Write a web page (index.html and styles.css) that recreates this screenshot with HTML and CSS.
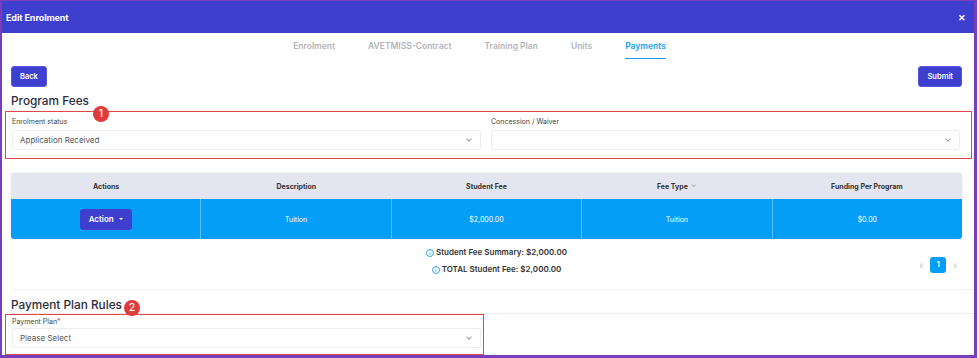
FILE: index.html
```html
<!DOCTYPE html>
<html lang="en">

<head>
  <meta charset="UTF-8">
  <meta name="viewport" content="width=device-width, initial-scale=1.0">
  <title>Edit Enrolment</title>
  <link rel="stylesheet" href="styles.css">
</head>

<body>
  <div class="modal">
    <!-- header -->
    <div class="modal-header">
      <span class="modal-title">Edit Enrolment</span>
      <span class="modal-close">&#10005;</span>
    </div>

    <!-- tabs -->
    <ul class="tabs">
      <li>Enrolment</li>
      <li>AVETMISS-Contract</li>
      <li>Training Plan</li>
      <li>Units</li>
      <li class="active">Payments</li>
    </ul>

    <div class="modal-body">
      <div class="toolbar">
        <button class="btn">Back</button>
        <button class="btn">Submit</button>
      </div>

      <h3 class="section-title">Program Fees<span class="badge badge-1">1</span></h3>

      <div class="marked marked-wide">
        <div class="field">
          <label>Enrolment status</label>
          <div class="select">Application Received<span class="chevron"></span></div>
        </div>
        <div class="field">
          <label>Concession / Waiver</label>
          <div class="select"><span class="chevron"></span></div>
        </div>
      </div>

      <!-- fees table -->
      <div class="fee-table">
        <div class="row head">
          <div class="cell">Actions</div>
          <div class="cell">Description</div>
          <div class="cell">Student Fee</div>
          <div class="cell">Fee Type <span class="sort">&#8964;</span></div>
          <div class="cell">Funding Per Program</div>
        </div>
        <div class="row body">
          <div class="cell"><button class="btn btn-action">Action <span class="caret"></span></button></div>
          <div class="cell">Tuition</div>
          <div class="cell">$2,000.00</div>
          <div class="cell">Tuition</div>
          <div class="cell">$0.00</div>
        </div>
      </div>

      <div class="summary">
        <div class="summary-lines">
          <p><span class="info">i</span>Student Fee Summary: $2,000.00</p>
          <p><span class="info">i</span>TOTAL Student Fee: $2,000.00</p>
        </div>
        <div class="pager">
          <span class="arrow">&#8249;</span>
          <span class="page">1</span>
          <span class="arrow">&#8250;</span>
        </div>
      </div>

      <h3 class="section-title rule">Payment Plan Rules<span class="badge badge-2">2</span></h3>

      <div class="marked marked-half">
        <div class="field">
          <label>Payment Plan<span class="req">*</span></label>
          <div class="select">Please Select<span class="chevron"></span></div>
        </div>
      </div>
    </div>
  </div>
</body>

</html>
```

FILE: styles.css
```css
/* global */
body {
  margin: 0;
  padding: 0;
  background-color: #f0f0f0;
  font-family: Inter, "Open Sans", sans-serif;
  color: #333;
}

.modal {
  width: 972px;
  height: 354px;
  background-color: white;
  border-style: solid;
  border-color: #7a3db8;
  border-width: 1px 3px 3px 2px;
  overflow: hidden;
}

/* header */
.modal-header {
  height: 32px;
  background-color: #3e3ecf;
  color: white;
  display: flex;
  align-items: center;
  justify-content: space-between;
  padding: 0 8px 0 4px;
}

.modal-title {
  font-size: 9px;
  font-weight: 700;
  letter-spacing: -0.1px;
}

.modal-close {
  font-size: 9px;
  font-weight: 700;
}

/* tabs */
.tabs {
  list-style-type: none;
  margin: 0;
  padding: 0 17px 0 0;
  height: 28px;
  display: flex;
  justify-content: center;
  gap: 33px;
}

.tabs li {
  font-size: 8.5px;
  font-weight: 600;
  color: #b3b3bb;
  display: flex;
  align-items: center;
  border-bottom: 1px solid transparent;
  padding-top: 1px;
  margin-bottom: 2px;
}

.tabs li.active {
  color: #1a9cf0;
  border-bottom-color: #1a9cf0;
}

/* body */
.modal-body {
  padding: 5px 12px 0 9px;
}

.toolbar {
  display: flex;
  justify-content: space-between;
}

.btn {
  font-family: inherit;
  background-color: #3e3ecf;
  color: white;
  border: 1px solid #5757e0;
  border-radius: 3px;
  font-size: 7.5px;
  font-weight: 600;
  height: 21px;
  padding: 0 8px;
  cursor: pointer;
}

.section-title {
  position: relative;
  margin: 6px 0 0 0;
  font-size: 11.8px;
  font-weight: 500;
  line-height: 16px;
  color: #2c2c3a;
}

.badge {
  position: absolute;
  top: 13px;
  width: 16px;
  height: 16px;
  border-radius: 50%;
  background-color: #e03a3a;
  color: white;
  font-size: 10.5px;
  font-weight: 500;
  line-height: 16px;
  text-align: center;
}

.badge-1 {
  left: 82px;
}

.badge-2 {
  left: 113px;
  top: 10px;
}

/* red annotation boxes */
.marked {
  border: 1.5px solid #e04848;
  margin: 2px 0 0 -6px;
  padding: 5px 0 8px 6px;
  display: flex;
  gap: 10px;
}

.marked-wide {
  width: 948px;
  padding-right: 11px;
}

.marked-half {
  width: 469px;
  padding-right: 2px;
  margin-top: 0;
  padding-top: 3px;
  padding-bottom: 6px;
}

.marked-half .field {
  gap: 2px;
}

.marked-half .field label {
  line-height: 8px;
}

.field {
  flex: 1;
  display: flex;
  flex-direction: column;
  gap: 3px;
}

.field label {
  font-size: 7px;
  color: #444;
  line-height: 10px;
}

.req {
  color: #e03a3a;
}

.select {
  position: relative;
  box-sizing: border-box;
  height: 20px;
  border: 1px solid #ececf2;
  border-radius: 3px;
  font-size: 8px;
  color: #555;
  line-height: 18px;
  padding-left: 7px;
}

.chevron {
  position: absolute;
  right: 9px;
  top: 6px;
  width: 3px;
  height: 3px;
  border-right: 1px solid #999;
  border-bottom: 1px solid #999;
  transform: rotate(45deg);
}

/* fee table */
.fee-table {
  margin-top: 14px;
  border-radius: 3px;
  overflow: hidden;
  box-shadow: 0 0 2px rgba(0, 0, 0, 0.15);
}

.row {
  display: flex;
}

.cell {
  flex: 1;
  display: flex;
  align-items: center;
  justify-content: center;
  font-size: 7px;
}

.row.head {
  height: 26px;
  background-color: #e3e5ef;
}

.row.head .cell {
  font-weight: 700;
  color: #333;
}

.sort {
  color: #aaa;
  margin-left: 3px;
  font-size: 7px;
  position: relative;
  top: -2px;
}

.row.body {
  height: 40px;
  background-color: #049ef6;
  color: white;
}

.row.body .cell + .cell {
  border-left: 1px solid #5bbdf5;
}

.btn-action {
  height: 21px;
  padding: 0 8px;
  font-size: 8px;
  border-color: #3e3ecf;
}

.caret {
  display: inline-block;
  margin-left: 3px;
  border-left: 2px solid transparent;
  border-right: 2px solid transparent;
  border-top: 2px solid white;
  vertical-align: 2px;
}

/* summary */
.summary {
  position: relative;
  height: 50px;
}

.summary-lines {
  text-align: center;
  padding-top: 8px;
  padding-left: 20px;
}

.summary-lines p {
  margin: 0 0 6px 0;
  font-size: 8px;
  font-weight: 600;
  line-height: 11px;
  color: #333;
}

.info {
  display: inline-block;
  width: 6px;
  height: 6px;
  border: 1px solid #3aa6ef;
  border-radius: 50%;
  color: #3aa6ef;
  font-size: 5px;
  line-height: 6px;
  text-align: center;
  margin-right: 2px;
  vertical-align: 0;
}

.pager {
  position: absolute;
  right: 5px;
  top: 18px;
  display: flex;
  align-items: center;
  gap: 7px;
}

.arrow {
  color: #bbb;
  font-size: 10px;
}

.page {
  width: 16px;
  height: 16px;
  border-radius: 3px;
  background-color: #049ef6;
  color: white;
  font-size: 7px;
  font-weight: 700;
  line-height: 16px;
  text-align: center;
}

.section-title.rule {
  margin-top: 0;
  padding-top: 7px;
  border-top: 1px solid #f2f2f2;
  border-bottom: 1px solid #ececec;
  margin-right: -12px;
}
```
